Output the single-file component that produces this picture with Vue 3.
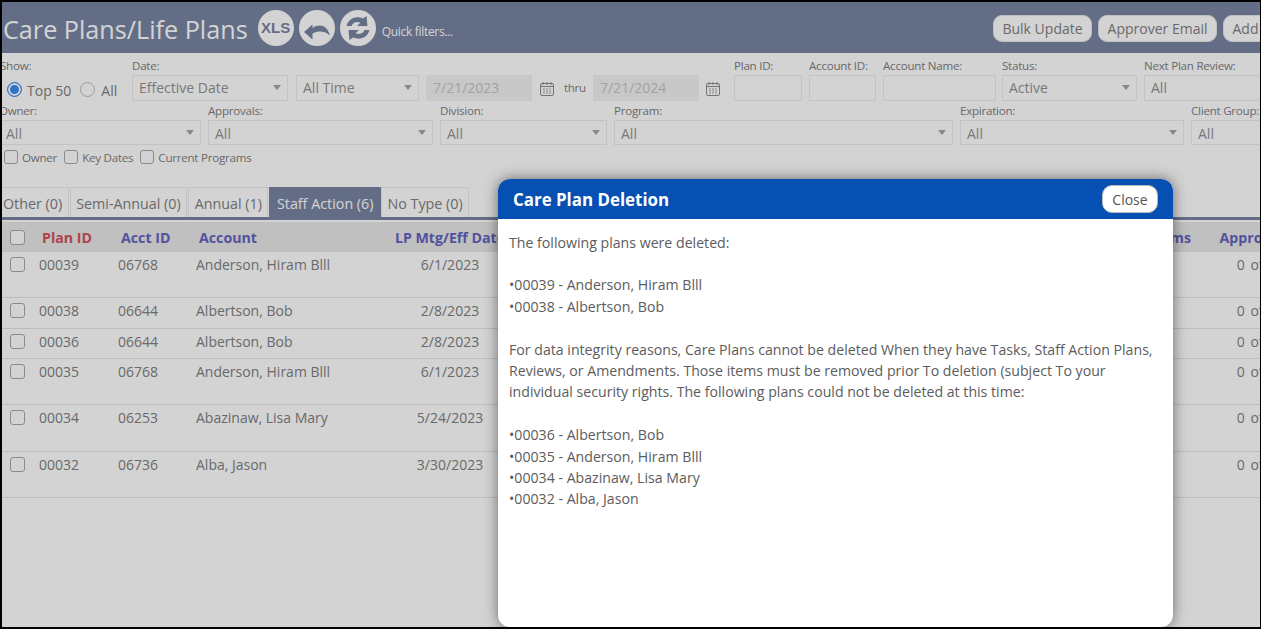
<template>
  <div class="frame">
    <div class="page">
      <header class="topbar">
        <h1>Care Plans/Life Plans</h1>
        <div class="round-btn xls">XLS</div>
        <div class="round-btn">
          <svg viewBox="0 0 36 36" width="36" height="36">
            <path d="M5 22 L13.5 14.5 L13.5 18 C20 13.5 28 15 31 25.5 C26 21 20 20.5 13.5 23.5 L13.5 29.5 Z" fill="#7886a3" />
          </svg>
        </div>
        <div class="round-btn">
          <svg viewBox="0 0 36 36" width="36" height="36" fill="#7886a3">
            <path d="M6.5 16 C8.5 8.5 16 5.5 23 8.5 L26.5 6 L27.5 16 L17 16 L20.5 12.8 C16.5 11.2 13 12.5 11.5 16 Z" />
            <path d="M29.5 20 C27.5 27.5 20 30.5 13 27.5 L9.5 30 L8.5 20 L19 20 L15.5 23.2 C19.5 24.8 23 23.5 24.5 20 Z" />
          </svg>
        </div>
        <span class="quick">Quick filters...</span>
        <div class="top-actions">
          <button class="pill">Bulk Update</button>
          <button class="pill">Approver Email</button>
          <button class="pill">Add Care Plan</button>
        </div>
      </header>

      <section class="filters">
        <div class="filter-row first">
          <div class="field show">
            <label>Show:</label>
            <div class="radios">
              <input type="radio" name="show" checked />
              <span class="radio-text top">Top 50</span>
              <input type="radio" name="show" />
              <span class="radio-text all">All</span>
            </div>
          </div>
          <div class="field w156">
            <label>Date:</label>
            <div class="select">Effective Date</div>
          </div>
          <div class="field w123 nolabel">
            <div class="select">All Time</div>
          </div>
          <div class="date-box">7/21/2023</div>
          <svg class="cal" viewBox="0 0 16 16" width="16" height="16">
            <rect x="1.5" y="2.5" width="13" height="12" rx="1.5" fill="none" stroke="#8d8d8d" />
            <path d="M4 1v3M8 1v3M12 1v3M1.5 5.5h13" stroke="#8d8d8d" />
            <path d="M4 8h2M7 8h2M10 8h2M4 10h2M7 10h2M10 10h2M4 12h2M7 12h2M10 12h2" stroke="#a8a8a8" />
          </svg>
          <span class="thru">thru</span>
          <div class="date-box second">7/21/2024</div>
          <svg class="cal second-cal" viewBox="0 0 16 16" width="16" height="16">
            <rect x="1.5" y="2.5" width="13" height="12" rx="1.5" fill="none" stroke="#8d8d8d" />
            <path d="M4 1v3M8 1v3M12 1v3M1.5 5.5h13" stroke="#8d8d8d" />
            <path d="M4 8h2M7 8h2M10 8h2M4 10h2M7 10h2M10 10h2M4 12h2M7 12h2M10 12h2" stroke="#a8a8a8" />
          </svg>
          <div class="field w68">
            <label>Plan ID:</label>
            <div class="text-box"></div>
          </div>
          <div class="field w67">
            <label>Account ID:</label>
            <div class="text-box"></div>
          </div>
          <div class="field w113">
            <label>Account Name:</label>
            <div class="text-box"></div>
          </div>
          <div class="field w135 status">
            <label>Status:</label>
            <div class="select">Active</div>
          </div>
          <div class="field w135">
            <label>Next Plan Review:</label>
            <div class="select">All</div>
          </div>
        </div>

        <div class="filter-row second-row">
          <div v-for="f in secondRow" :key="f.label" class="field" :style="{ width: f.width + 'px' }">
            <label>{{ f.label }}</label>
            <div class="select">All</div>
          </div>
        </div>

        <div class="check-row">
          <label v-for="c in checks" :key="c"><input type="checkbox" />{{ c }}</label>
        </div>
      </section>

      <nav class="tabs">
        <div v-for="t in tabs" :key="t" class="tab" :class="{ active: t === 'Staff Action (6)' }">{{ t }}</div>
      </nav>

      <div class="grid head">
        <div class="cb"><input type="checkbox" /></div>
        <div class="sort">Plan ID</div>
        <div>Acct ID</div>
        <div>Account</div>
        <div class="center">LP Mtg/Eff Date</div>
        <div class="items">Items</div>
        <div class="center">Approvals</div>
      </div>
      <div v-for="r in rows" :key="r.id" class="grid row" :class="{ tall: r.tall }">
        <div class="cb"><input type="checkbox" /></div>
        <div>{{ r.id }}</div>
        <div>{{ r.acct }}</div>
        <div>{{ r.name }}</div>
        <div class="center">{{ r.date }}</div>
        <div></div>
        <div class="center approvals">0 of 0</div>
      </div>
    </div>

    <div class="overlay"></div>

    <div class="modal">
      <div class="modal-head">
        <span>Care Plan Deletion</span>
        <button class="close">Close</button>
      </div>
      <div class="modal-body">
        <p>The following plans were deleted:</p>
        <p>•00039 - Anderson, Hiram Blll<br />•00038 - Albertson, Bob</p>
        <p>
          For data integrity reasons, Care Plans cannot be deleted When they have Tasks, Staff Action Plans,<br />
          Reviews, or Amendments. Those items must be removed prior To deletion (subject To your<br />
          individual security rights. The following plans could not be deleted at this time:
        </p>
        <p>•00036 - Albertson, Bob<br />•00035 - Anderson, Hiram Blll<br />•00034 - Abazinaw, Lisa Mary<br />•00032 - Alba, Jason</p>
      </div>
    </div>
  </div>
</template>

<script setup>
const secondRow = [
  { label: 'Owner:', width: 202 },
  { label: 'Approvals:', width: 225 },
  { label: 'Division:', width: 167 },
  { label: 'Program:', width: 339 },
  { label: 'Expiration:', width: 224 },
  { label: 'Client Group:', width: 135 },
];

const checks = ['Owner', 'Key Dates', 'Current Programs'];

const tabs = ['Other (0)', 'Semi-Annual (0)', 'Annual (1)', 'Staff Action (6)', 'No Type (0)'];

const rows = [
  { id: '00039', acct: '06768', name: 'Anderson, Hiram Blll', date: '6/1/2023', tall: true },
  { id: '00038', acct: '06644', name: 'Albertson, Bob', date: '2/8/2023', tall: false },
  { id: '00036', acct: '06644', name: 'Albertson, Bob', date: '2/8/2023', tall: false },
  { id: '00035', acct: '06768', name: 'Anderson, Hiram Blll', date: '6/1/2023', tall: true },
  { id: '00034', acct: '06253', name: 'Abazinaw, Lisa Mary', date: '5/24/2023', tall: true },
  { id: '00032', acct: '06736', name: 'Alba, Jason', date: '3/30/2023', tall: true },
];
</script>

<style>
html,
body {
  margin: 0;
  overflow: hidden;
  background: #000;
}
</style>

<style scoped>
.frame {
  position: relative;
  width: 1261px;
  height: 629px;
  box-sizing: border-box;
  border-top: 2px solid #000;
  border-left: 2px solid #000;
  border-right: 1px solid #000;
  border-bottom: 2px solid #000;
  overflow: hidden;
  font-family: "Open Sans", sans-serif;
  color: #808080;
}

.page {
  width: 1400px;
  height: 100%;
  background: #fff;
}

.overlay {
  position: absolute;
  inset: 0;
  background: rgba(0, 0, 0, 0.173);
}

.topbar {
  display: flex;
  align-items: center;
  height: 51px;
  background: #7886a3;
  color: #fff;
}

.topbar h1 {
  margin: 0 10px 0 1px;
  padding-top: 2px;
  font-size: 25.2px;
  font-weight: 400;
  white-space: nowrap;
}

.round-btn {
  flex: none;
  display: flex;
  align-items: center;
  justify-content: center;
  width: 36px;
  height: 36px;
  margin-right: 5px;
  border-radius: 50%;
  background: #fff;
}

.xls {
  color: #7886a3;
  font-family: "Liberation Sans", sans-serif;
  font-size: 15px;
  font-weight: 700;
}

.quick {
  margin-left: 1px;
  margin-top: 7px;
  font-size: 12px;
  letter-spacing: -0.3px;
  white-space: nowrap;
}

.top-actions {
  display: flex;
  flex: none;
  gap: 6px;
  margin-left: 540px;
  margin-top: 2px;
}

.pill {
  height: 27px;
  padding: 0 8.5px;
  border: 1px solid #e8e8e8;
  border-radius: 9px;
  background: #fff;
  color: #808080;
  font-family: inherit;
  font-size: 14px;
  white-space: nowrap;
}

.filters {
  margin-left: -2px;
}

.filter-row {
  display: flex;
  align-items: flex-end;
  gap: 7px;
}

.first {
  height: 46px;
  margin-top: 2px;
}

.second-row {
  height: 44px;
  margin-left: -1px;
}

.field {
  flex: none;
  display: flex;
  flex-direction: column;
}

.field label {
  height: 19px;
  font-size: 11.6px;
  line-height: 20px;
  letter-spacing: -0.25px;
  white-space: nowrap;
}

.show {
  width: 125px;
}

.radios {
  display: flex;
  align-items: center;
  height: 26px;
  padding-left: 7px;
  padding-top: 2px;
  box-sizing: border-box;
  font-size: 14px;
}

.radios input {
  appearance: none;
  width: 15px;
  height: 15px;
  margin: 0;
  border: 1px solid #bbb;
  border-radius: 50%;
  background: #fff;
}

.radios input:checked {
  border-color: #3b8df0;
  box-shadow: inset 0 0 0 2px #fff;
  background: #3b8df0;
}

.radio-text {
  margin-left: 5px;
  margin-top: 2px;
}

.radio-text.top {
  margin-right: 9px;
}

.radio-text.all {
  margin-left: 6px;
}

.w156 {
  width: 156px;
}

.w123 {
  width: 123px;
  margin-left: 1px;
}

.w68 {
  width: 68px;
}

.w67 {
  width: 67px;
}

.w113 {
  width: 113px;
}

.w135 {
  width: 135px;
}

.status {
  margin-left: -1px;
}

.select,
.text-box,
.date-box {
  box-sizing: border-box;
  height: 26px;
  border: 1px solid #ececec;
  font-size: 14px;
  line-height: 24px;
  white-space: nowrap;
}

.select {
  position: relative;
  padding-left: 6px;
  color: #929292;
}

.select::after {
  content: "";
  position: absolute;
  right: 6px;
  top: 9px;
  border-top: 5px solid #a6a6a6;
  border-left: 4px solid transparent;
  border-right: 4px solid transparent;
}

.second-row .select {
  height: 25px;
  line-height: 25px;
}

.date-box {
  flex: none;
  width: 106px;
  padding-left: 6px;
  background: #f2f2f2;
  color: #c4c4c4;
  border-color: #f2f2f2;
}

.cal {
  flex: none;
  margin: 0 0 4px 0;
}

.thru {
  width: 22px;
  margin: 0 0 6px 2px;
  font-size: 11.5px;
  letter-spacing: -0.3px;
}

.second-cal {
  margin-left: -1px;
  margin-right: 6px;
}

.check-row {
  display: flex;
  gap: 7px;
  height: 26px;
  padding: 4px 0 0 4px;
  box-sizing: border-box;
  font-size: 11.6px;
  letter-spacing: -0.25px;
}

.check-row label {
  display: flex;
  align-items: center;
  gap: 4px;
  height: 16px;
}

.check-row input[type="checkbox"] {
  width: 14px;
  height: 14px;
}

input[type="checkbox"] {
  appearance: none;
  flex: none;
  box-sizing: border-box;
  width: 15px;
  height: 15px;
  margin: 0;
  border: 1px solid #a8a8a8;
  border-radius: 3px;
  background: #fff;
}

.tabs {
  display: flex;
  align-items: flex-end;
  gap: 1px;
  margin-left: -2px;
  margin-top: 16px;
  height: 30px;
  border-bottom: 3px solid #7886a3;
}

.tab {
  box-sizing: border-box;
  height: 30px;
  padding: 0 5.5px;
  border: 1px solid #ececec;
  border-bottom: 0;
  font-size: 14.3px;
  line-height: 31px;
  white-space: nowrap;
}

.tab:first-child {
  padding-left: 2px;
}

.tab.active {
  margin-right: -1px;
  padding: 0 6.5px;
  background: #7886a3;
  border-color: #7886a3;
  color: #fff;
}

.grid {
  display: grid;
  grid-template-columns: 37px 79px 78px 194px 120px 695px 100px;
  margin-left: -2px;
  padding-left: 2px;
  font-size: 14px;
}

.head {
  height: 30px;
  margin-top: 2px;
  align-items: center;
  background: #e8e8e8;
  font-size: 14.2px;
  font-weight: 700;
  color: #6464c0;
}

.head > div:not(.cb) {
  padding-top: 1px;
}

.head > div:not(.cb):not(.center) {
  padding-left: 3px;
}

.head .sort {
  color: #d5525a;
}

.head .items {
  padding-right: 14px;
  text-align: right;
}

.center {
  text-align: center;
  white-space: nowrap;
}

.approvals {
  padding-left: 4px;
  word-spacing: 2px;
}

.cb {
  display: flex;
  padding-left: 8px;
}

.row {
  box-sizing: border-box;
  height: 30.5px;
  padding-top: 2px;
  border-bottom: 1px solid #e4e4e4;
  line-height: 21px;
}

.row.tall {
  height: 46.2px;
}

.row .cb {
  padding-top: 3px;
}

.modal {
  position: absolute;
  left: 496px;
  top: 177px;
  width: 675px;
  height: 448px;
  overflow: hidden;
  border-radius: 12px;
  background: #fff;
  box-shadow: 0 0 14px rgba(0, 0, 0, 0.5);
}

.modal-head {
  display: flex;
  align-items: center;
  justify-content: space-between;
  height: 40px;
  padding: 0 15px;
  background: #0550b2;
  color: #fff;
  font-size: 16.9px;
  font-weight: 700;
}

.close {
  width: 56px;
  height: 28px;
  padding: 0;
  border: 1px solid #bbb;
  border-radius: 10px;
  background: #fff;
  color: #555;
  font-family: inherit;
  font-size: 14px;
}

.modal-body {
  padding: 12.5px 11px;
  color: #5c5c5c;
  font-size: 14.15px;
  line-height: 21.4px;
}

.modal-body p {
  margin: 0 0 21.4px;
  white-space: nowrap;
}
</style>
